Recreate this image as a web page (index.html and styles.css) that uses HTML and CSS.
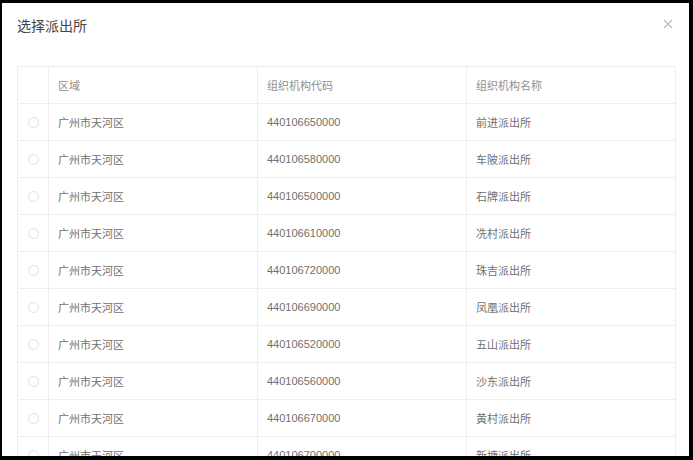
FILE: index.html
```html
<!DOCTYPE html>
<html lang="zh">
<head>
<meta charset="utf-8">
<link rel="stylesheet" href="styles.css">
</head>
<body>
<div class="dialog">
  <div class="header">
    <span class="title">选择派出所</span>
    <span class="close">
      <svg width="10" height="10" viewBox="0 0 10 10"><path d="M1 1L9 9M9 1L1 9" stroke="#bbb" stroke-width="1.1" fill="none"/></svg>
    </span>
  </div>
  <div class="body">
    <table class="grid">
      <colgroup><col class="c0"><col class="c1"><col class="c2"><col class="c3"></colgroup>
      <thead>
        <tr><th></th><th>区域</th><th>组织机构代码</th><th>组织机构名称</th></tr>
      </thead>
      <tbody>
        <tr><td><span class="radio"></span></td><td>广州市天河区</td><td>440106650000</td><td>前进派出所</td></tr>
        <tr><td><span class="radio"></span></td><td>广州市天河区</td><td>440106580000</td><td>车陂派出所</td></tr>
        <tr><td><span class="radio"></span></td><td>广州市天河区</td><td>440106500000</td><td>石牌派出所</td></tr>
        <tr><td><span class="radio"></span></td><td>广州市天河区</td><td>440106610000</td><td>冼村派出所</td></tr>
        <tr><td><span class="radio"></span></td><td>广州市天河区</td><td>440106720000</td><td>珠吉派出所</td></tr>
        <tr><td><span class="radio"></span></td><td>广州市天河区</td><td>440106690000</td><td>凤凰派出所</td></tr>
        <tr><td><span class="radio"></span></td><td>广州市天河区</td><td>440106520000</td><td>五山派出所</td></tr>
        <tr><td><span class="radio"></span></td><td>广州市天河区</td><td>440106560000</td><td>沙东派出所</td></tr>
        <tr><td><span class="radio"></span></td><td>广州市天河区</td><td>440106670000</td><td>黄村派出所</td></tr>
        <tr><td><span class="radio"></span></td><td>广州市天河区</td><td>440106700000</td><td>新塘派出所</td></tr>
      </tbody>
    </table>
  </div>
</div>
</body>
</html>
```

FILE: styles.css
```css
html, body {
  margin: 0;
  padding: 0;
  background: #000;
  height: 460px;
  overflow: hidden;
}
body {
  padding: 3px 4px 4px 2px;
  box-sizing: border-box;
  font-family: "Liberation Sans", "Noto Sans CJK SC", sans-serif;
}
.dialog {
  background: #fff;
  height: 453px;
  overflow: hidden;
  display: flex;
  flex-direction: column;
}
.header {
  display: flex;
  justify-content: space-between;
  align-items: center;
  padding: 12px 16px 0 15px;
  height: 20px;
}
.title {
  font-size: 14px;
  color: #444;
  line-height: 20px;
  font-family: "Noto Sans CJK SC", sans-serif;
}
.close {
  display: flex;
  margin-top: -2px;
}
.body {
  padding: 31px 0 0 15px;
}
.grid {
  border-collapse: collapse;
  width: 658px;
  table-layout: fixed;
  font-size: 11px;
  color: #707070;
}
.c0 { width: 31px; }
.c1 { width: 209px; }
.c2 { width: 209px; }
.c3 { width: 209px; }
.grid th, .grid td {
  border: 1px solid #eeeeee;
  height: 37px;
  padding: 0 9px;
  text-align: left;
  font-weight: normal;
  box-sizing: border-box;
}
.grid th {
  color: #909090;
}
.grid td:first-child, .grid th:first-child {
  padding: 0;
  text-align: center;
}
.radio {
  display: inline-block;
  width: 9px;
  height: 9px;
  border: 1px solid #e0e0e0;
  border-radius: 50%;
  vertical-align: middle;
}
```
